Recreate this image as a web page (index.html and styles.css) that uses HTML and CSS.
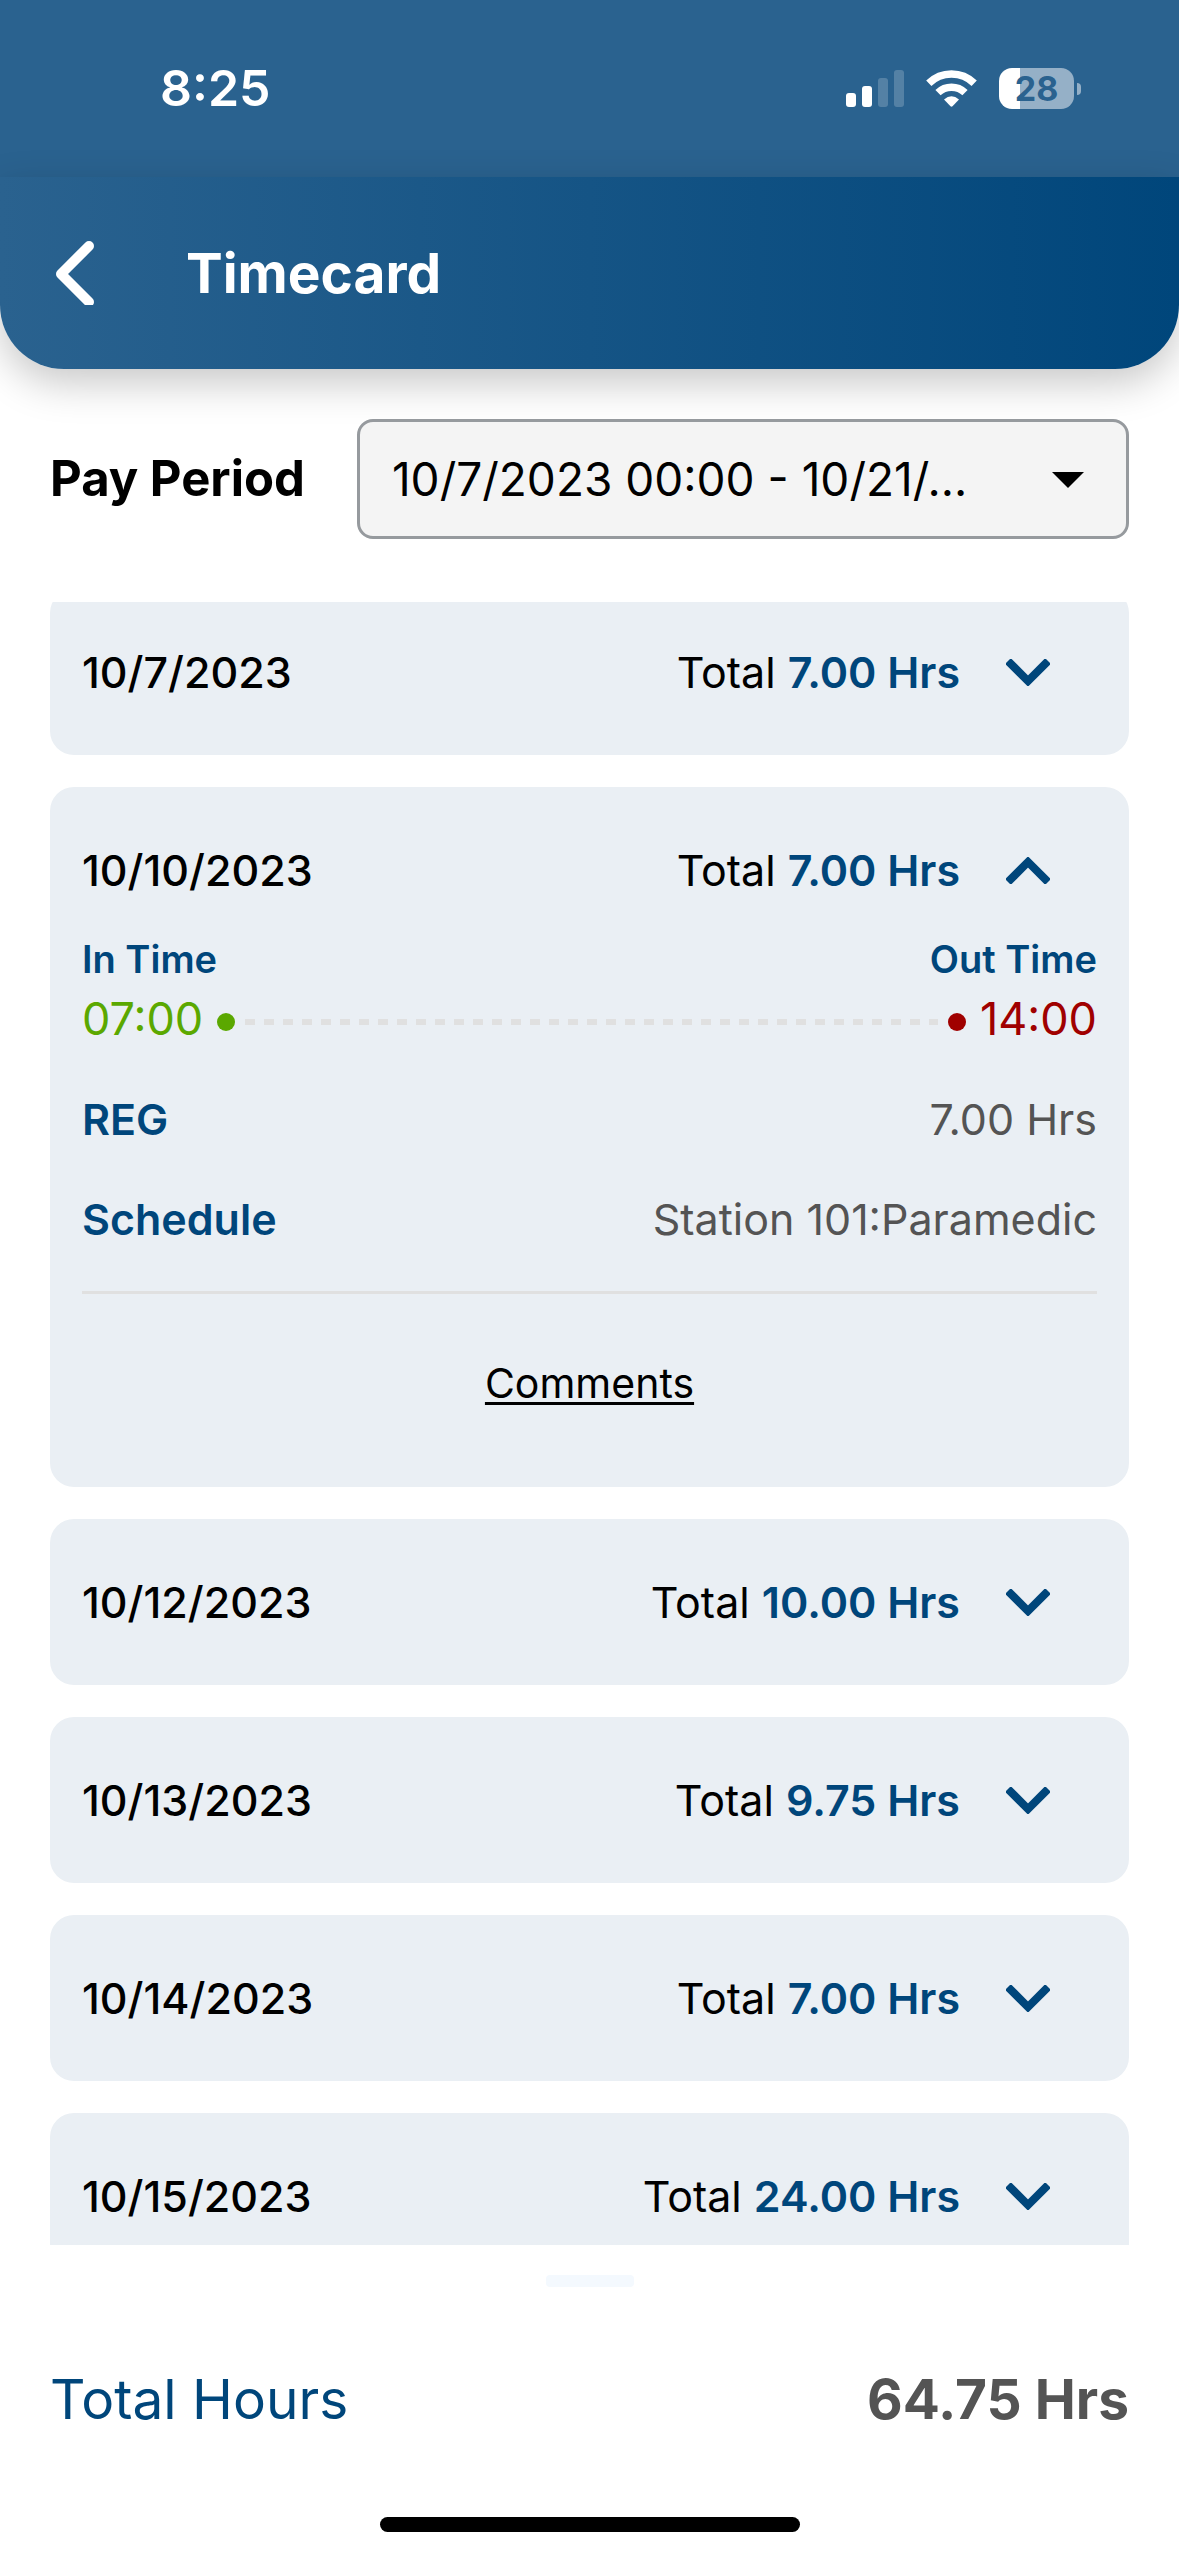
FILE: index.html
```
<!DOCTYPE html>
<html lang="en">
	<head>
		<meta charset="UTF-8">
		<meta name="viewport" content="width=device-width,initial-scale=1">
		<title>Timecard</title>
		<link rel="stylesheet" href="styles.css">
	</head>
	<body>
		<div class="app">
			<div class="status">
				<span class="clock">8:25</span>
				<div class="status-icons">
					<svg width="58" height="37" viewBox="0 0 58 37" fill="#fff">
						<rect x="0" y="23" width="10" height="14" rx="3"/>
						<rect x="16" y="16" width="10" height="21" rx="3"/>
						<rect x="32" y="8" width="10" height="29" rx="3" opacity=".2"/>
						<rect x="48" y="0" width="10" height="37" rx="3" opacity=".2"/>
					</svg>
					<svg width="51" height="37" viewBox="0 0 51 37" fill="none" stroke="#fff">
						<path d="M2.8 13.3A32.5 32.5 0 0 1 48.2 13.3" stroke-width="7.5"/>
						<path d="M12 22.6A19.5 19.5 0 0 1 39 22.6" stroke-width="7.5"/>
						<path d="M18 29.5Q25.5 23 33 29.5L26.5 36.3Q25.5 37.2 24.5 36.3Z" fill="#fff" stroke="none"/>
					</svg>
					<div class="battery"><span>28</span></div>
				</div>
			</div>
			<header class="header">
				<button class="back" type="button" aria-label="Back">
					<svg width="39" height="64" viewBox="0 0 39 64" fill="none" stroke="#fff" stroke-width="10" stroke-linecap="round" stroke-linejoin="round">
						<path d="M34 5L6 33L34 61"/>
					</svg>
				</button>
				<h1>Timecard</h1>
			</header>
			<div class="period">
				<label for="period">Pay Period</label>
				<div class="select">
					<select id="period">
						<option>10/7/2023 00:00 - 10/21/...</option>
					</select>
					<svg class="caret" width="32" height="16" viewBox="0 0 32 16"><path d="M0 0H32L16 16Z"/></svg>
				</div>
			</div>
			<main class="list">
				<ul>
					<li class="card">
						<button class="day" type="button" aria-expanded="false">
							<span class="date">10/7/2023</span>
							<span>Total <b>7.00 Hrs</b></span>
							<svg class="arrow" width="44" height="27" viewBox="0 0 44 27"><path d="M2 2L22 22L42 2"/></svg>
						</button>
					</li>
					<li class="card">
						<button class="day" type="button" aria-expanded="true">
							<span class="date">10/10/2023</span>
							<span>Total <b>7.00 Hrs</b></span>
							<svg class="arrow" width="44" height="27" viewBox="0 0 44 27"><path d="M2 25L22 5L42 25"/></svg>
						</button>
						<div class="detail">
							<div class="row small">
								<span>In Time</span>
								<span>Out Time</span>
							</div>
							<div class="times">
								<span class="in">07:00</span>
								<i class="dot in"></i>
								<i class="dash"></i>
								<i class="dot out"></i>
								<span class="out">14:00</span>
							</div>
							<div class="row">
								<b>REG</b>
								<span>7.00 Hrs</span>
							</div>
							<div class="row">
								<b>Schedule</b>
								<span>Station 101:Paramedic</span>
							</div>
							<div class="comments"><a href="#">Comments</a></div>
						</div>
					</li>
					<li class="card">
						<button class="day" type="button" aria-expanded="false">
							<span class="date">10/12/2023</span>
							<span>Total <b>10.00 Hrs</b></span>
							<svg class="arrow" width="44" height="27" viewBox="0 0 44 27"><path d="M2 2L22 22L42 2"/></svg>
						</button>
					</li>
					<li class="card">
						<button class="day" type="button" aria-expanded="false">
							<span class="date">10/13/2023</span>
							<span>Total <b>9.75 Hrs</b></span>
							<svg class="arrow" width="44" height="27" viewBox="0 0 44 27"><path d="M2 2L22 22L42 2"/></svg>
						</button>
					</li>
					<li class="card">
						<button class="day" type="button" aria-expanded="false">
							<span class="date">10/14/2023</span>
							<span>Total <b>7.00 Hrs</b></span>
							<svg class="arrow" width="44" height="27" viewBox="0 0 44 27"><path d="M2 2L22 22L42 2"/></svg>
						</button>
					</li>
					<li class="card">
						<button class="day" type="button" aria-expanded="false">
							<span class="date">10/15/2023</span>
							<span>Total <b>24.00 Hrs</b></span>
							<svg class="arrow" width="44" height="27" viewBox="0 0 44 27"><path d="M2 2L22 22L42 2"/></svg>
						</button>
					</li>
				</ul>
			</main>
			<footer class="footer">
				<div class="handle"></div>
				<div class="total">
					<span>Total Hours</span>
					<b>64.75 Hrs</b>
				</div>
				<div class="home"></div>
			</footer>
		</div>
	</body>
</html>
```
FILE: styles.css
```
*{margin: 0;padding: 0;box-sizing: border-box;}
body{font-family: Inter, "Liberation Sans", sans-serif;font-size: 43px;line-height: 60px;color: #000;background: #fff;}
li{list-style: none;}
button{border: 0;background: none;font: inherit;color: inherit;}
svg{display: block;flex: none;}
.app{display: flex;flex-direction: column;height: 100vh;}

.status{display: flex;justify-content: space-between;height: 177px;padding: 58px 98px 0 160px;background: #2a628f;color: #fff;}
.clock{font-size: 50px;font-weight: 600;}
.status-icons{display: flex;align-items: center;gap: 22px;height: 60px;}
.battery{position: relative;width: 75px;height: 41px;border-radius: 13px;margin-right: 7px;background: linear-gradient(90deg, #fff 21px, #95b0c7 21px);text-align: center;}
.battery span{display: block;font-size: 34px;line-height: 41px;font-weight: 700;color: #2a628f;}
.battery:after{content: "";position: absolute;right: -7px;top: 15px;width: 4px;height: 12px;border-radius: 0 4px 4px 0;background: #95b0c7;}

.header{position: relative;display: flex;align-items: center;gap: 92px;height: 192px;padding: 0 55px;border-radius: 0 0 64px 64px;background: linear-gradient(90deg, #2a628f, #00467b);box-shadow: 0 14px 40px rgba(0,0,0,.22);color: #fff;}
.header h1{font-size: 55px;font-weight: 700;}

.period{display: flex;align-items: center;gap: 52px;padding: 50px 50px 63px;}
.period label{font-size: 49px;font-weight: 700;}
.select{position: relative;flex: 1;}
.select select{width: 100%;height: 120px;padding: 0 100px 0 32px;border: 3px solid #969a9e;border-radius: 16px;background: #f4f4f4;font: inherit;font-size: 46px;color: #000;appearance: none;}
.caret{position: absolute;right: 45px;top: 53px;pointer-events: none;}

.list{flex: 1;min-height: 0;overflow: hidden;padding: 0 50px;}
/* list is scrolled a little under the period bar */
.list ul{display: flex;flex-direction: column;gap: 32px;margin-top: -13px;}
.card{border-radius: 24px;background: #eaeff4;}
.day{display: flex;align-items: center;width: 100%;height: 166px;padding: 0 79px 0 32px;text-align: left;}
.day b{font-weight: 600;color: #00467b;}
.date{flex: 1;font-weight: 500;}
.arrow{margin-left: 46px;fill: none;stroke: #00467b;stroke-width: 8;}

.detail{padding: 0 32px 74px;}
.row{display: flex;justify-content: space-between;margin-top: 40px;color: #545454;}
.row b{font-weight: 600;color: #00467b;}
.small{margin-top: -24px;font-size: 38px;font-weight: 600;color: #00467b;}
.times{display: flex;align-items: center;font-size: 45px;}
.dot{width: 18px;height: 18px;margin-top: 6px;border-radius: 50%;background: currentColor;}
.dot.in{margin-left: 14px;margin-right: 10px;}
.dot.out{margin-left: 10px;margin-right: 14px;}
.in{color: #5ba800;}
.out{color: #a00000;}
.dash{flex: 1;height: 6px;margin-top: 6px;background: repeating-linear-gradient(90deg, #e0e0e0 0 10px, transparent 10px 19px);}
.comments{margin-top: 42px;padding-top: 59px;border-top: 3px solid #e0e0e0;font-size: 41px;text-align: center;}
.comments a{color: #000;text-decoration-thickness: 3px;text-underline-offset: 4px;}

.footer{display: flex;flex-direction: column;align-items: center;padding: 30px 50px 24px;}
.handle{width: 88px;height: 12px;border-radius: 4px;background: #f4f9fe;}
.total{display: flex;justify-content: space-between;width: 100%;margin-top: 82px;font-size: 55px;color: #00467b;}
.total b{font-weight: 700;color: #545454;}
.home{width: 420px;height: 15px;margin-top: 88px;border-radius: 8px;background: #000;}
```
